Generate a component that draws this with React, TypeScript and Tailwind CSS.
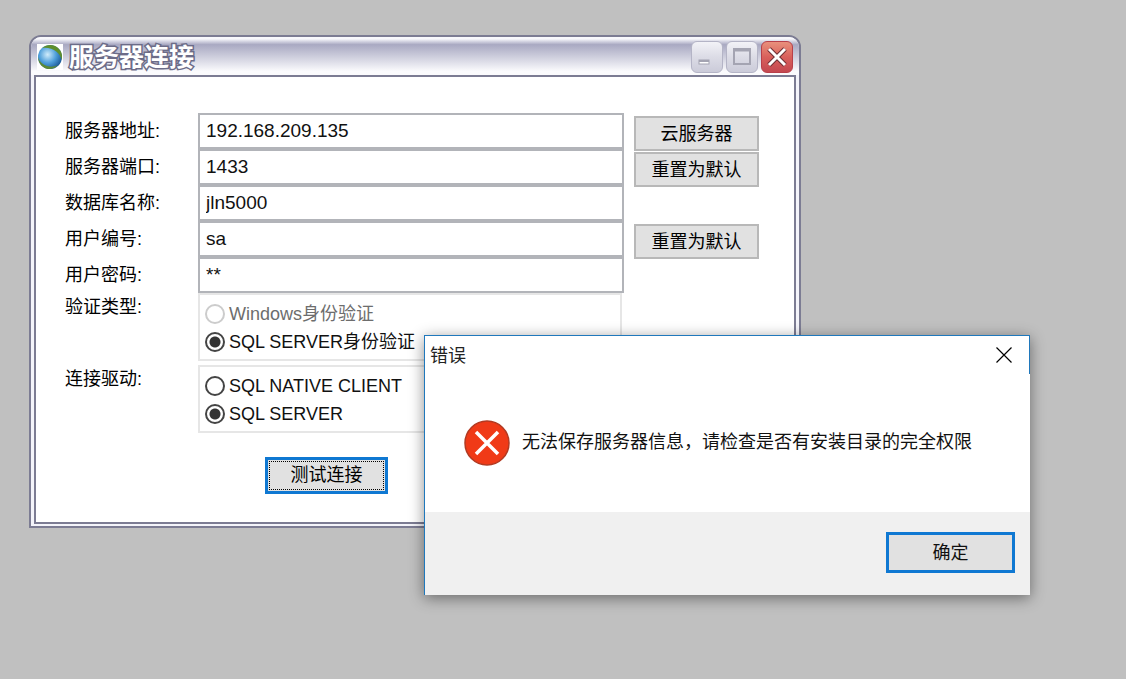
import { useState } from "react";
import type { ReactNode } from "react";

interface IField {
  id: string;
  label: string;
  value: string;
  action?: string;
}

const fields: IField[] = [
  {
    id: "host",
    label: "服务器地址:",
    value: "192.168.209.135",
    action: "云服务器",
  },
  { id: "port", label: "服务器端口:", value: "1433", action: "重置为默认" },
  { id: "database", label: "数据库名称:", value: "jln5000" },
  { id: "user", label: "用户编号:", value: "sa", action: "重置为默认" },
  { id: "password", label: "用户密码:", value: "**" },
];

const GlobeIcon = () => (
  <svg viewBox="0 0 26 26" className="size-[26px]" aria-hidden="true">
    <defs>
      <radialGradient id="sea" cx="0.4" cy="0.4" r="0.7">
        <stop offset="0" stopColor="#d0ecfb" />
        <stop offset="0.5" stopColor="#4f9fda" />
        <stop offset="1" stopColor="#0f4a8a" />
      </radialGradient>
    </defs>
    <rect width="26" height="26" fill="#fff" />
    <circle cx="13" cy="13" r="12" fill="url(#sea)" />
    <path
      d="M5 4C10 0 18 0 22 5c3 3 3.500 7 2.600 11-.9-3.500-2.400-6-5-8.200C15.500 4.500 10 3 5 4Z"
      fill="#5f8f2c"
    />
    <path
      d="M1 13c1.500 5 5 8 10 9.300 3.500.8 7 .4 10-1.300-3 3.500-8 5-12 3.500C4.500 23 1.200 18.500 1 13Z"
      fill="#5d8a35"
    />
  </svg>
);

const Radio = ({
  name,
  label,
  checked,
  disabled,
  onChange,
}: {
  name: string;
  label: string;
  checked: boolean;
  disabled?: boolean;
  onChange: () => void;
}) => (
  <label
    className={`flex items-center gap-1 h-7 ${disabled ? "text-[#6d6d6d]" : "text-[#111]"}`}
  >
    <input
      type="radio"
      name={name}
      checked={checked}
      disabled={disabled}
      onChange={onChange}
      className="appearance-none shrink-0 size-5 rounded-full border-2 border-[#444] bg-white checked:bg-[radial-gradient(circle,#333_0_5px,#fff_6px)] disabled:border-[#ccc]"
    />
    {label}
  </label>
);

const RadioGroup = ({
  id,
  label,
  children,
}: {
  id: string;
  label: string;
  children: ReactNode;
}) => (
  <div role="radiogroup" aria-labelledby={id} className="flex">
    <span id={id} className="w-[133px] leading-7">
      {label}
    </span>
    <div className="w-[424px] h-[68px] px-[5px] pt-[5px] border-2 border-[#e6e6e6]">
      {children}
    </div>
  </div>
);

const CaptionButton = ({
  label,
  danger,
  children,
}: {
  label: string;
  danger?: boolean;
  children: ReactNode;
}) => (
  <button
    type="button"
    aria-label={label}
    className={`size-8 rounded-md border ${
      danger
        ? "border-[#b8404a] bg-linear-to-b from-[#e8907c] via-[#d9605c] to-[#c44850]"
        : "border-[#b4b4c6] bg-linear-to-b from-[#f2f2f7] via-[#dcdce6] to-[#cbcbd9]"
    }`}
  >
    <svg viewBox="0 0 30 30" className="size-full" fill="none">
      {children}
    </svg>
  </button>
);

const ServerWindow = () => {
  const [auth, setAuth] = useState("SQL SERVER身份验证");
  const [driver, setDriver] = useState("SQL SERVER");

  return (
    <section className="absolute left-[29px] top-[35px] w-[772px] rounded-t-xl border-2 border-[#7c7c93] bg-[#f4f4fa] overflow-hidden">
      <header className="flex items-center h-[38px] pt-px px-[6px] gap-[6px] bg-linear-to-b from-[#f8f8fc] from-5% via-[#a9a9c2] via-20% to-[#fbfbfd] to-90%">
        <GlobeIcon />
        <h1 className="flex-1 text-[25px] leading-9 font-bold text-white [-webkit-text-stroke:3px_#6c6c88] [paint-order:stroke_fill]">
          服务器连接
        </h1>
        <div className="flex gap-[3px]">
          <CaptionButton label="最小化">
            <rect x="7" y="18" width="10" height="4" stroke="#a4a4b2" fill="#fff" />
            <path d="M7 19h10" stroke="#a4a4b2" strokeWidth="2" />
          </CaptionButton>
          <CaptionButton label="最大化">
            <rect x="7" y="7" width="16" height="15" stroke="#a4a4b2" strokeWidth="2" />
            <path d="M7 8h16" stroke="#a4a4b2" strokeWidth="3" />
          </CaptionButton>
          <CaptionButton label="关闭" danger>
            <path d="M7 7l16 16M23 7L7 23" stroke="#6d2f34" strokeWidth="5" />
            <path d="M7 7l16 16M23 7L7 23" stroke="#fff" strokeWidth="3" />
          </CaptionButton>
        </div>
      </header>
      <form className="mx-[3px] mb-[2px] border-2 border-[#7c7c93] bg-white pl-[29px] pt-9 pb-7 text-lg">
        {fields.map((field) => (
          <div key={field.id} className="flex h-9">
            <label htmlFor={field.id} className="w-[133px] leading-9">
              {field.label}
            </label>
            <input
              id={field.id}
              defaultValue={field.value}
              className="w-[426px] h-9 px-[6px] border-2 border-[#b2b4b9] text-[19px] text-[#111] outline-none"
            />
            {field.action && (
              <div className="pl-[10px] pt-[3px]">
                <button
                  type="button"
                  className="w-[125px] h-[35px] border-2 border-[#b8b8b8] bg-[#e1e1e1] leading-7"
                >
                  {field.action}
                </button>
              </div>
            )}
          </div>
        ))}
        <div className="flex flex-col gap-1">
          <RadioGroup id="auth-label" label="验证类型:">
            <Radio
              name="auth"
              label="Windows身份验证"
              disabled
              checked={auth === "Windows身份验证"}
              onChange={() => setAuth("Windows身份验证")}
            />
            <Radio
              name="auth"
              label="SQL SERVER身份验证"
              checked={auth === "SQL SERVER身份验证"}
              onChange={() => setAuth("SQL SERVER身份验证")}
            />
          </RadioGroup>
          <RadioGroup id="driver-label" label="连接驱动:">
            {["SQL NATIVE CLIENT", "SQL SERVER"].map((name) => (
              <Radio
                key={name}
                name="driver"
                label={name}
                checked={driver === name}
                onChange={() => setDriver(name)}
              />
            ))}
          </RadioGroup>
        </div>
        <button
          type="button"
          className="block ml-[200px] mt-6 w-[123px] h-[37px] p-px border-3 border-[#0f78d2] bg-[#e1e1e1]"
        >
          <span className="block border border-dotted border-black leading-[27px]">
            测试连接
          </span>
        </button>
      </form>
    </section>
  );
};

const ErrorDialog = () => (
  <section
    role="alertdialog"
    aria-labelledby="error-title"
    className="absolute left-[424px] top-[335px] w-[606px] border-t border-l border-[#1f78bc] bg-white text-lg shadow-[0_3px_14px_rgba(0,0,0,0.45)]"
  >
    <header className="flex justify-between h-[38px] pl-[5px] pr-4 border-r border-[#1f78bc]">
      <h2 id="error-title" className="leading-10 text-[#222]">
        错误
      </h2>
      <button type="button" aria-label="关闭" className="px-px">
        <svg viewBox="0 0 16 16" className="size-4">
          <path d="M.5.5l15 15M15.500.5l-15 15" stroke="#000" strokeWidth="1.200" />
        </svg>
      </button>
    </header>
    <div className="flex items-center gap-3 h-[138px] pl-[39px]">
      <svg viewBox="0 0 46 46" className="size-[46px]" aria-hidden="true">
        <circle cx="23" cy="23" r="22" fill="#f03a17" stroke="#b23a22" strokeWidth="1.500" />
        <path d="M12 12l22 22M34 12L12 34" stroke="#fff" strokeWidth="3.500" />
      </svg>
      <p className="pb-[2px] text-[#111]">
        无法保存服务器信息，请检查是否有安装目录的完全权限
      </p>
    </div>
    <footer className="flex justify-end h-[83px] pt-5 pr-[15px] bg-[#f0f0f0]">
      <button
        type="button"
        className="w-[129px] h-[41px] border-3 border-[#0f78d2] bg-[#e1e1e1] text-[#111]"
      >
        确定
      </button>
    </footer>
  </section>
);

const App = () => (
  <main className="relative min-h-screen overflow-hidden bg-[#c0c0c0] font-['Liberation_Sans','Noto_Sans_CJK_SC',sans-serif] text-black">
    <ServerWindow />
    <ErrorDialog />
  </main>
);

export default App;
